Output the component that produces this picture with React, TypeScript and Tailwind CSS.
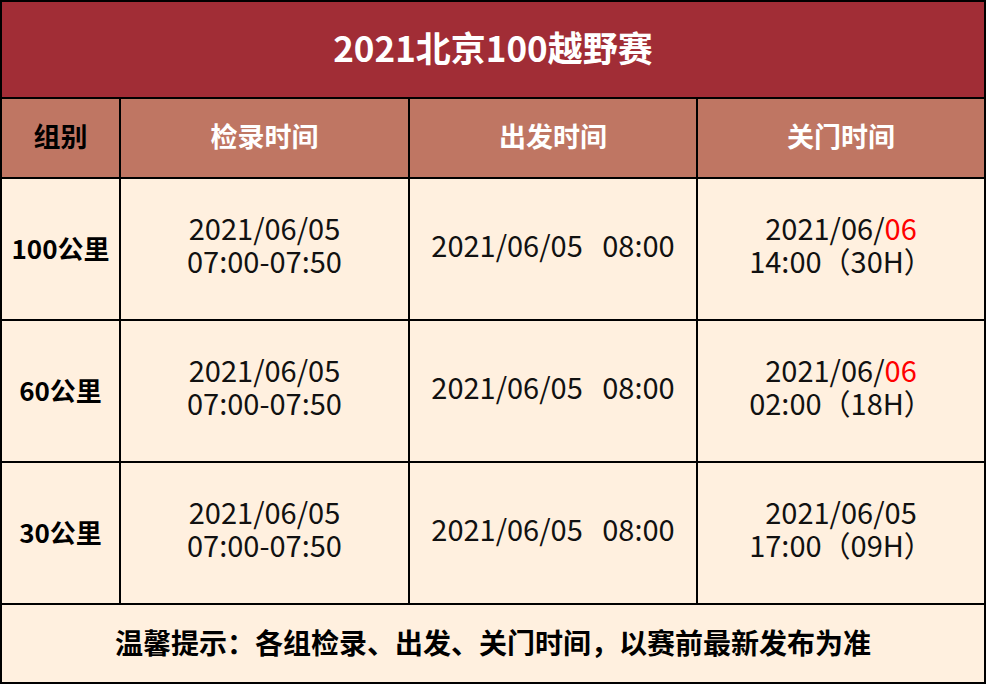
const rows = [
  { group: '100公里', close: '06', closeTime: '14:00（30H）', red: true },
  { group: '60公里', close: '06', closeTime: '02:00（18H）', red: true },
  { group: '30公里', close: '05', closeTime: '17:00（09H）', red: false },
]

const font = { fontFamily: '"Noto Sans CJK SC", "Noto Sans", sans-serif' }

export default function App() {
  return (
    <div
      className="w-[986px] h-[684px] bg-black p-[2px] grid gap-[2px] grid-cols-[117px_287px_286px_286px] grid-rows-[95px_78px_140px_140px_140px_77px]"
      style={font}
    >
      <div className="col-span-4 bg-[#a12d36] flex items-center justify-center text-white font-bold text-[35px] pb-[4px]">
        2021北京100越野赛
      </div>

      {['组别', '检录时间', '出发时间', '关门时间'].map((h, i) => (
        <div
          key={h}
          className={`bg-[#bf7663] flex items-center justify-center font-bold text-[27px] pb-[4px] ${i === 0 ? 'text-black' : 'text-white'}`}
        >
          {h}
        </div>
      ))}

      {rows.map((r) => (
        <div key={r.group} className="contents">
          <div className="bg-[#fff0df] flex items-center justify-center font-bold text-[26px] text-black pb-[4px]">
            {r.group}
          </div>
          <div className="bg-[#fff0df] flex flex-col items-center justify-center text-[29px] leading-[33px] text-[#111] pb-[10px]">
            <span className="leading-[33px]">2021/06/05</span>
            <span className="leading-[33px]">07:00-07:50</span>
          </div>
          <div className="bg-[#fff0df] flex items-center justify-center text-[29px] text-[#111] whitespace-pre pb-[8px]">
            2021/06/05   08:00
          </div>
          <div className="bg-[#fff0df] flex flex-col items-center justify-center text-[29px] leading-[33px] text-[#111] pb-[10px]">
            <span className="leading-[33px]">
              2021/06/<span className={r.red ? 'text-[#ff0000]' : ''}>{r.close}</span>
            </span>
            <span className="leading-[33px]">{r.closeTime}</span>
          </div>
        </div>
      ))}

      <div className="col-span-4 bg-[#fff0df] flex items-center justify-center font-bold text-[28px] text-black pb-[4px]">
        温馨提示：各组检录、出发、关门时间，以赛前最新发布为准
      </div>
    </div>
  )
}
